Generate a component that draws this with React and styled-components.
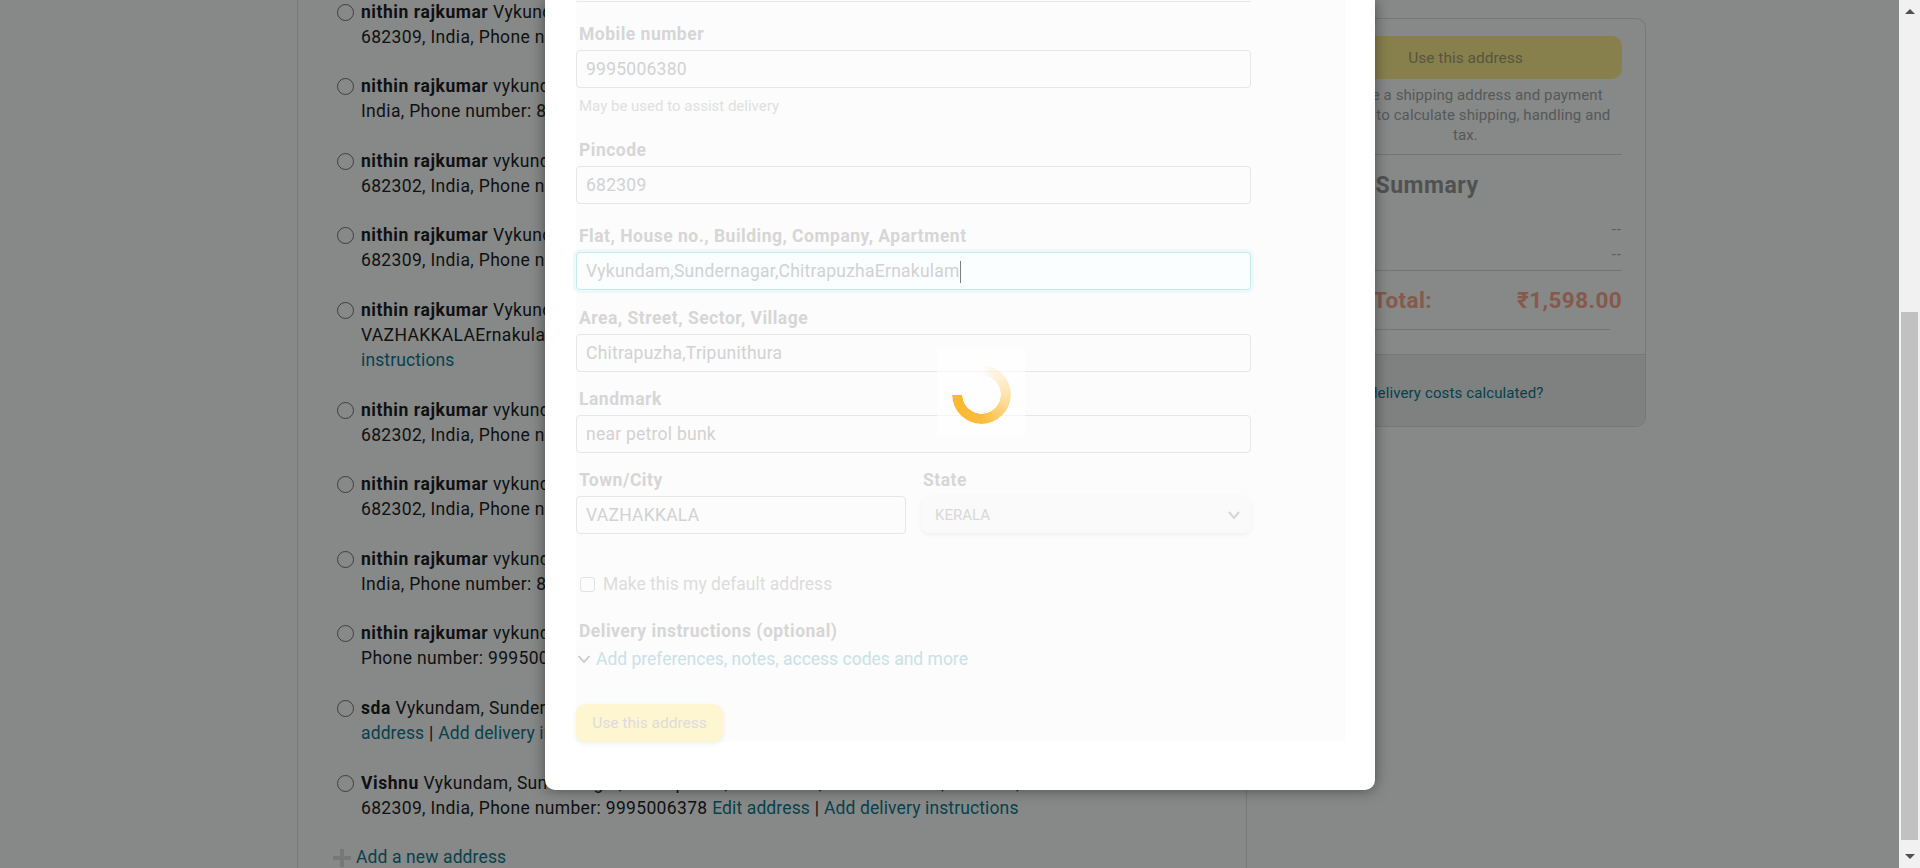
import React from "react"
import styled, { createGlobalStyle } from "styled-components"

const GlobalStyle = createGlobalStyle`
  html, body {
    margin: 0;
    height: 100%;
    overflow: hidden;
  }
  body {
    background: #878888;
    color: #0f1111;
    font-family: Roboto, "Noto Sans", sans-serif;
    font-size: 17.5px;
    line-height: 25px;
  }
`

const ADDRESSES = [
  { name: "nithin rajkumar", lines: ["Vykundam, Sundernagar, Chitrapuzha, Ernakulam, TRIPUNITHURA, KERALA,", "682309, India, Phone number: 9995006380"], edit: true },
  { name: "nithin rajkumar", lines: ["vykundam, sundernagar, chitrapuzha, Ernakulam, VAZHAKKALA, KERALA, 682309,", "India, Phone number: 8129006380"], edit: true },
  { name: "nithin rajkumar", lines: ["vykundam, sundernagar, chitrapuzha, Ernakulam, VAZHAKKALA, KERALA,", "682302, India, Phone number: 9995006380"], edit: true },
  { name: "nithin rajkumar", lines: ["Vykundam, Sundernagar, Chitrapuzha, Ernakulam, VAZHAKKALA, KERALA,", "682309, India, Phone number: 9995006380"], edit: true },
  { name: "nithin rajkumar", lines: ["Vykundam, Sundernagar, Chitrapuzha, Tripunithura, near petrol bunk,", "VAZHAKKALAErnakulam, KERALA, 682309, India, Phone number: 9995006380 Edit address | Add delivery"], tail: "instructions" },
  { name: "nithin rajkumar", lines: ["vykundam, sundernagar, chitrapuzha, Ernakulam, VAZHAKKALA, KERALA,", "682302, India, Phone number: 9995006380"], edit: true },
  { name: "nithin rajkumar", lines: ["vykundam, sundernagar, chitrapuzha, Ernakulam, VAZHAKKALA, KERALA,", "682302, India, Phone number: 8129006380"], edit: true },
  { name: "nithin rajkumar", lines: ["vykundam, sundernagar, chitrapuzha, Ernakulam, VAZHAKKALA, KERALA, 682309,", "India, Phone number: 8129006380"], edit: true },
  { name: "nithin rajkumar", lines: ["vykundam, sundernagar, Ernakulam, VAZHAKKALA, KERALA, 682309, India,", "Phone number: 9995006380"], edit: true },
  { name: "sda", lines: ["Vykundam, Sundernagar, Ernakulam, VAZHAKKALA, KERALA, 682309, India, Phone number: 9995006380 Edit"], linkLine: "address | Add delivery instructions" },
  { name: "Vishnu", lines: ["Vykundam, Sundernagar, Chitrapuzha, Ernakulam, VAZHAKKALA, KERALA,", "682309, India, Phone number: 9995006378"], edit: true },
]

const Checkout = () => (
  <Page>
    <GlobalStyle />
    <AddressColumn>
      {ADDRESSES.map((a, i) => (
        <AddressRow key={i}>
          <Radio />
          <AddressText>
            <Line>
              <b>{a.name}</b> {a.lines[0]}
            </Line>
            {a.lines[1] && (
              <Line>
                {a.lines[1]}
                {a.edit && (
                  <>
                    {" "}
                    <Link>Edit address</Link> | <Link>Add delivery instructions</Link>
                  </>
                )}
              </Line>
            )}
            {a.tail && (
              <Line>
                <Link>{a.tail}</Link>
              </Line>
            )}
            {a.linkLine && (
              <Line>
                <Link>address</Link> | <Link>Add delivery instructions</Link>
              </Line>
            )}
          </AddressText>
        </AddressRow>
      ))}
      <AddNew>
        <svg width="20" height="20" viewBox="0 0 20 20">
          <path d="M10 1v18M1 10h18" stroke="#767878" strokeWidth="4" fill="none" />
        </svg>
        <Link>Add a new address</Link>
      </AddNew>
    </AddressColumn>

    <SummaryCard>
      <SummaryBody>
        <UseButton>Use this address</UseButton>
        <Note>
          Choose a shipping address and payment
          <br />
          method to calculate shipping, handling and
          <br />
          tax.
        </Note>
        <Rule />
        <SummaryTitle>Order Summary</SummaryTitle>
        <SummaryRow>
          <span>Items:</span>
          <span>--</span>
        </SummaryRow>
        <SummaryRow>
          <span>Delivery:</span>
          <span>--</span>
        </SummaryRow>
        <TotalRule />
        <TotalRow>
          <span>Order Total:</span>
          <span>₹1,598.00</span>
        </TotalRow>
        <ShortRule />
      </SummaryBody>
      <SummaryFooter>
        <Link>How are delivery costs calculated?</Link>
      </SummaryFooter>
    </SummaryCard>

    <Modal>
      <Form>
        <CutOffInput />
        <FieldLabel $top={19.5}>Mobile number</FieldLabel>
        <InputBox>9995006380</InputBox>
        <Hint>May be used to assist delivery</Hint>
        <FieldLabel $top={22}>Pincode</FieldLabel>
        <InputBox>682309</InputBox>
        <FieldLabel $top={20}>Flat, House no., Building, Company, Apartment</FieldLabel>
        <InputBox $focused>
          Vykundam,Sundernagar,ChitrapuzhaErnakulam
          <Caret />
        </InputBox>
        <FieldLabel $top={16}>Area, Street, Sector, Village</FieldLabel>
        <InputBox>Chitrapuzha,Tripunithura</InputBox>
        <FieldLabel $top={15}>Landmark</FieldLabel>
        <InputBox>near petrol bunk</InputBox>
        <TwoCols>
          <div>
            <FieldLabel>Town/City</FieldLabel>
            <InputBox>VAZHAKKALA</InputBox>
          </div>
          <div>
            <FieldLabel>State</FieldLabel>
            <StateSelect>
              KERALA
              <svg width="14" height="10" viewBox="0 0 14 10">
                <path d="M2 2l5 6 5-6" stroke="#d6d6d6" strokeWidth="2" fill="none" />
              </svg>
            </StateSelect>
          </div>
        </TwoCols>
        <DefaultRow>
          <CheckBox />
          Make this my default address
        </DefaultRow>
        <DeliveryLabel>Delivery instructions (optional)</DeliveryLabel>
        <Expander>
          <svg width="14" height="10" viewBox="0 0 14 10">
            <path d="M1.5 2l5.5 6 5.5-6" stroke="#c8c8c8" strokeWidth="1.6" fill="none" />
          </svg>
          <span>Add preferences, notes, access codes and more</span>
        </Expander>
        <SubmitButton>Use this address</SubmitButton>
      </Form>
      <SpinnerBox>
        <Spinner />
      </SpinnerBox>
    </Modal>

    <Scrollbar>
      <ArrowButton>
        <svg width="10" height="6" viewBox="0 0 10 6">
          <path d="M0 6l5-5 5 5z" fill="#505050" />
        </svg>
      </ArrowButton>
      <Track>
        <Thumb />
      </Track>
      <ArrowButton>
        <svg width="10" height="6" viewBox="0 0 10 6">
          <path d="M0 0l5 5 5-5z" fill="#505050" />
        </svg>
      </ArrowButton>
    </Scrollbar>
  </Page>
)

export default Checkout

const Page = styled.div`
  position: relative;
  height: 868px;
  width: 1920px;
  overflow: hidden;
  display: flex;
  align-items: flex-start;
  padding-left: 297px;
  box-sizing: border-box;
`

const AddressColumn = styled.div`
  width: 950px;
  height: 868px;
  box-sizing: border-box;
  border-left: 1px solid #767878;
  border-right: 1px solid #767878;
  padding-left: 39px;
  flex: none;
`

const AddressRow = styled.div`
  display: flex;
  gap: 7px;
  margin-bottom: 24.6px;
  &:first-child {
    margin-top: -0.4px;
  }
`

const Radio = styled.span`
  flex: none;
  width: 17px;
  height: 17px;
  box-sizing: border-box;
  margin-top: 4px;
  border: 1.5px solid #3d3f3f;
  border-radius: 50%;
`

const AddressText = styled.div`
  white-space: nowrap;
  letter-spacing: 0.34px;
`

const Line = styled.div`
  b {
    font-weight: 700;
    letter-spacing: 0.55px;
  }
`

const Link = styled.a`
  color: #07414b;
  letter-spacing: 0.12px;
`

const AddNew = styled.div`
  display: flex;
  align-items: center;
  gap: 4px;
  margin: 2px 0 0 -5px;
`

const SummaryCard = styled.div`
  width: 361px;
  margin: 18px 0 0 38px;
  flex: none;
  box-sizing: border-box;
  height: 409px;
  border: 1px solid #767878;
  border-radius: 10px;
  overflow: hidden;
  display: flex;
  flex-direction: column;
`

const SummaryBody = styled.div`
  flex: 1;
  padding: 17px 23px 0;
`

const UseButton = styled.div`
  height: 43px;
  line-height: 45px;
  background: #87804c;
  border-radius: 10px;
  text-align: center;
  color: #565540;
  font-size: 15.5px;
`

const Note = styled.div`
  margin-top: 6px;
  margin-bottom: -1px;
  text-align: center;
  color: #565858;
  font-size: 15px;
  letter-spacing: 0.1px;
  line-height: 20px;
`

const Rule = styled.div`
  height: 1px;
  background: #737575;
  margin-top: 10px;
`

const TotalRule = styled(Rule)`
  margin-top: 3px;
`

const SummaryTitle = styled.div`
  margin: 17px 0 17px;
  color: #505252;
  font-weight: 700;
  font-size: 23px;
  letter-spacing: 0.5px;
  line-height: 28px;
`

const SummaryRow = styled.div`
  display: flex;
  justify-content: space-between;
  color: #5a5c5c;
  font-size: 15px;
  letter-spacing: 1px;
  line-height: 25px;
`

const TotalRow = styled.div`
  display: flex;
  justify-content: space-between;
  margin-top: 14px;
  color: #85594c;
  font-weight: 700;
  font-size: 22.5px;
  letter-spacing: 0.4px;
  line-height: 30px;
`

const ShortRule = styled.div`
  height: 1px;
  background: #737575;
  margin: 14px 12px 0 0;
`

const SummaryFooter = styled.div`
  height: 72px;
  box-sizing: border-box;
  background: #7f8080;
  border-top: 1px solid #767878;
  padding: 26px 23px 0;
  font-size: 15px;
`

const Modal = styled.div`
  position: absolute;
  left: 545px;
  top: 0;
  width: 830px;
  height: 790px;
  box-sizing: border-box;
  background: #fff;
  border-radius: 0 0 10px 10px;
  box-shadow: 0 0 14px rgba(15, 17, 17, 0.5);
  padding-left: 31px;
`

const Form = styled.div`
  width: 769px;
  height: 742px;
  box-sizing: border-box;
  background: #fcfcfc;
  display: flex;
  flex-direction: column;
  align-items: flex-start;
`

const CutOffInput = styled.div`
  width: 675px;
  height: 2px;
  box-sizing: border-box;
  border-bottom: 1px solid #e6e6e6;
  border-radius: 0 0 4px 4px;
`

const FieldLabel = styled.div`
  margin-top: ${props => props.$top || 0}px;
  margin-bottom: 3px;
  padding-left: 3px;
  color: #d6d6d6;
  font-weight: 700;
  letter-spacing: 0.5px;
`

const InputBox = styled.div`
  width: 675px;
  height: 38px;
  box-sizing: border-box;
  padding: 0 9px;
  line-height: 36px;
  letter-spacing: 0.25px;
  border: 1px solid ${props => (props.$focused ? "#c6e8f0" : "#e6e6e6")};
  border-radius: 4px;
  color: #d2d2d2;
  background: ${props => (props.$focused ? "#fbfefe" : "#fcfcfc")};
  box-shadow: ${props => (props.$focused ? "0 0 0 3px #edf9fb, -3px 0 0 0 #cdf3f9" : "none")};
`

const Caret = styled.span`
  display: inline-block;
  width: 1px;
  height: 22px;
  background: #808080;
  vertical-align: middle;
`

const Hint = styled.div`
  margin-top: 8px;
  padding-left: 3px;
  color: #e0e0e0;
  font-size: 15px;
  line-height: 20px;
`

const TwoCols = styled.div`
  margin-top: 15px;
  width: 675px;
  display: grid;
  grid-template-columns: 330px 331px;
  column-gap: 14px;
  ${InputBox} {
    width: 100%;
  }
`

const StateSelect = styled.div`
  height: 37px;
  margin-left: 2px;
  box-sizing: border-box;
  padding: 2px 10px 0 13px;
  display: flex;
  align-items: center;
  justify-content: space-between;
  background: #fafafa;
  border-radius: 8px;
  box-shadow: 0 2px 5px rgba(15, 17, 17, 0.05);
  color: #d8d8d8;
  font-size: 15px;
`

const DefaultRow = styled.div`
  margin: 38px 0 0 4px;
  display: flex;
  align-items: center;
  gap: 8px;
  color: #dcdcdc;
  height: 25px;
`

const CheckBox = styled.span`
  width: 15px;
  height: 15px;
  box-sizing: border-box;
  border: 1px solid #e2e2e2;
  border-radius: 3px;
`

const DeliveryLabel = styled.div`
  margin-top: 22px;
  padding-left: 3px;
  color: #d6d6d6;
  font-weight: 700;
  letter-spacing: 0.5px;
`

const Expander = styled.div`
  margin-top: 3px;
  display: flex;
  align-items: center;
  gap: 5px;
  padding-left: 1px;
  color: #c9e1e8;
`

const SubmitButton = styled.div`
  margin-top: 32px;
  width: 147px;
  height: 38px;
  line-height: 38px;
  text-align: center;
  border-radius: 10px;
  background: #fef5d1;
  color: #dcdcdc;
  font-size: 15.5px;
  box-shadow: 0 2px 5px rgba(213, 217, 217, 0.4);
`

const SpinnerBox = styled.div`
  position: absolute;
  left: 392px;
  top: 347px;
  width: 88px;
  height: 89px;
  box-sizing: border-box;
  padding-top: 5px;
  display: flex;
  align-items: center;
  justify-content: center;
  background: rgba(255, 255, 255, 0.6);
`

const Spinner = styled.div`
  width: 59px;
  height: 59px;
  border-radius: 50%;
  background: conic-gradient(from 0deg, rgba(254, 184, 44, 0) 0deg, #fde3ae 90deg, #fdbb3c 180deg, #fdb82c 270deg, transparent 270deg);
  mask: radial-gradient(circle, transparent 19px, #000 19.5px);
`

const Scrollbar = styled.div`
  position: absolute;
  right: 0;
  top: 0;
  width: 21px;
  height: 868px;
  background: #f1f1f1;
  display: flex;
  flex-direction: column;
`

const ArrowButton = styled.div`
  height: 22px;
  display: flex;
  align-items: center;
  justify-content: center;
`

const Track = styled.div`
  flex: 1;
  display: flex;
  flex-direction: column;
  justify-content: flex-end;
  padding: 0 2px 6px;
`

const Thumb = styled.div`
  height: 528px;
  background: #c1c1c1;
`
